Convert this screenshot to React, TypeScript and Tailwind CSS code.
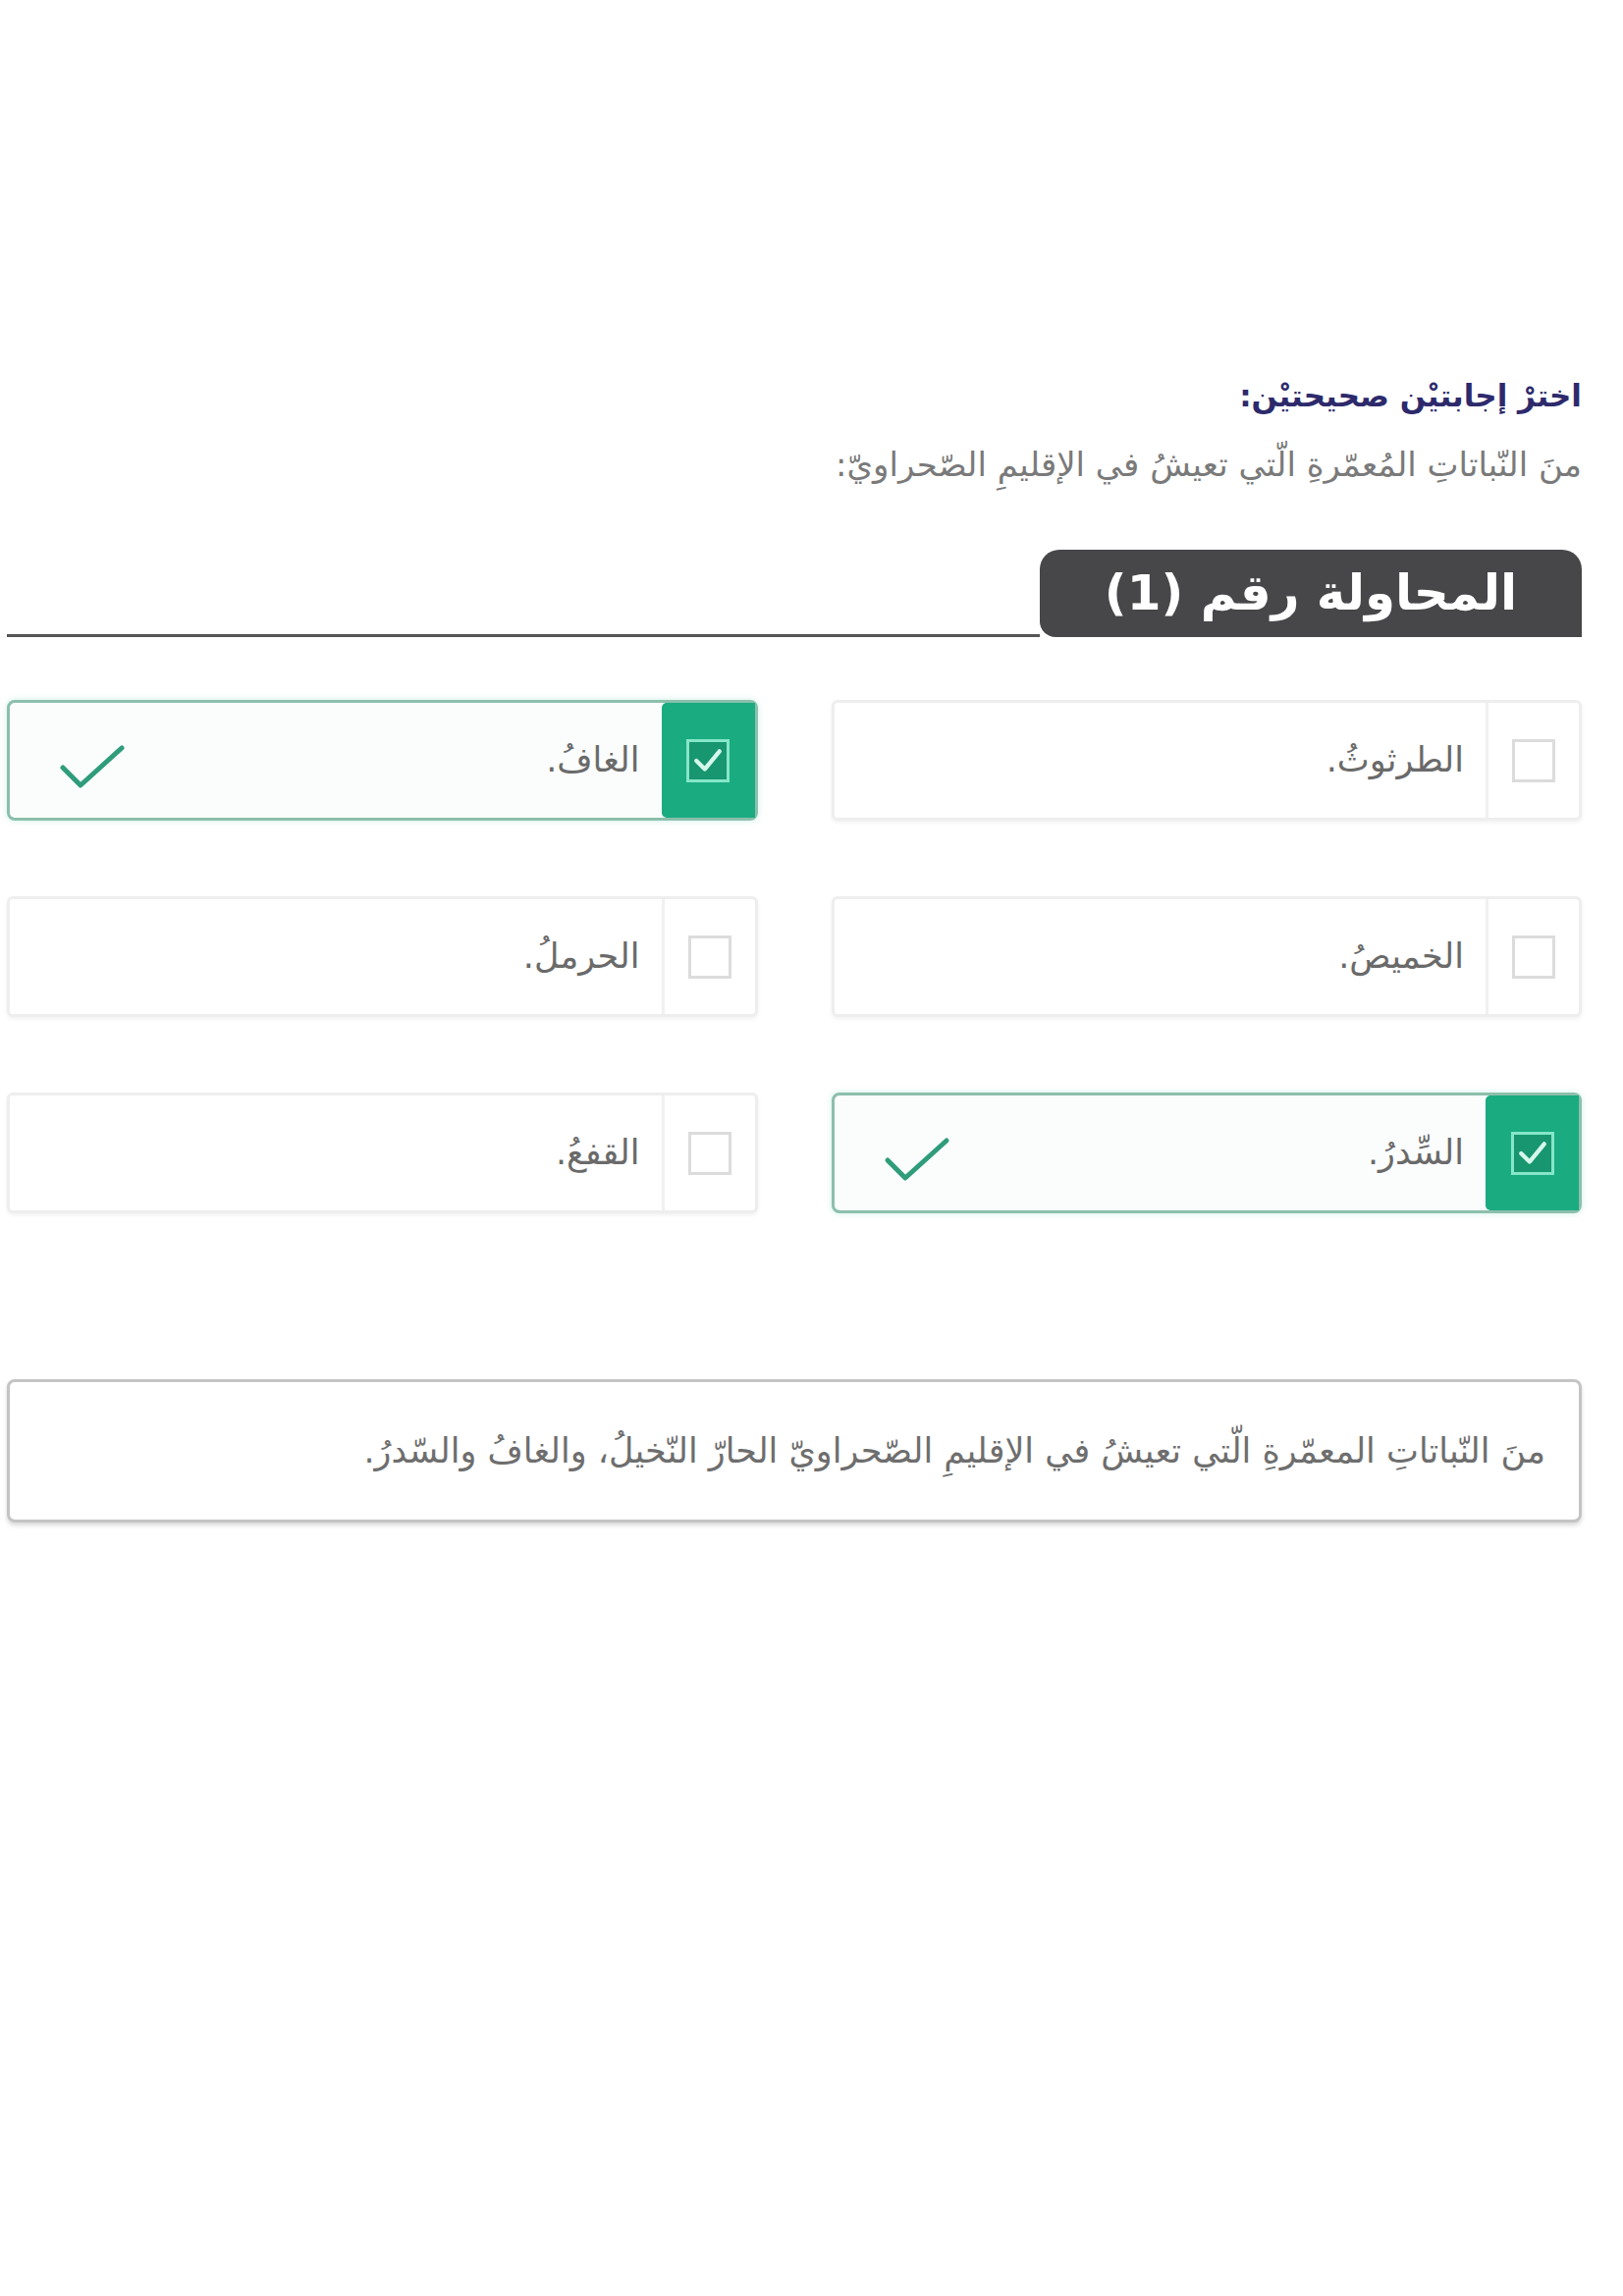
import React from 'react'

interface Option {
  label: string
  checked: boolean
}

// rows go right -> left because the page is rtl
const options: Option[] = [
  { label: 'الطرثوثُ.', checked: false },
  { label: 'الغافُ.', checked: true },
  { label: 'الخميصُ.', checked: false },
  { label: 'الحرملُ.', checked: false },
  { label: 'السِّدرُ.', checked: true },
  { label: 'القفعُ.', checked: false },
]

function BigCheck() {
  return (
    <svg width="68" height="48" viewBox="0 0 68 48" fill="none">
      <path d="M4 24 L22 42 L64 4" stroke="#2f9c7a" strokeWidth="5" strokeLinecap="round" strokeLinejoin="round" />
    </svg>
  )
}

function OptionCard({ option }: { option: Option }) {
  if (option.checked) {
    return (
      <div className="flex h-[123px] items-stretch rounded-[8px] border-[3px] border-[#8cbfac] bg-[#fbfdfd] shadow-[0_0_6px_rgba(60,200,160,0.25)]">
        <div className="flex w-[95px] shrink-0 items-center justify-center rounded-l-[5px] bg-[#1aab81]">
          <div className="flex h-[44px] w-[44px] items-center justify-center border-[3px] border-[#86e6c8] bg-[#17966f]">
            <svg width="30" height="26" viewBox="0 0 28 24" fill="none">
              <path d="M3 12 L11 20 L25 3" stroke="#d6f7ec" strokeWidth="4" strokeLinecap="round" strokeLinejoin="round" />
            </svg>
          </div>
        </div>
        <div className="flex flex-1 items-center pr-[22px] text-[35px] text-[#6a6a6a]">{option.label}</div>
        <div className="flex items-center pl-[50px] pt-[14px]">
          <BigCheck />
        </div>
      </div>
    )
  }
  return (
    <div className="flex h-[123px] items-stretch rounded-[6px] border-[3px] border-[#eeeeee] bg-white shadow-[0_2px_4px_rgba(0,0,0,0.06)]">
      <div className="flex w-[95px] shrink-0 items-center justify-center border-l-[3px] border-[#f0f0f0]">
        <div className="h-[44px] w-[44px] border-[3px] border-[#dcdcdc] bg-white" />
      </div>
      <div className="flex flex-1 items-center pr-[22px] text-[35px] text-[#6a6a6a]">{option.label}</div>
    </div>
  )
}

export default function App() {
  return (
    <div dir="rtl" className="min-h-[2339px] bg-white font-['DejaVu_Sans',sans-serif]">
      <div className="ml-[7px] mr-[42px] pt-[380px]">
        <h1 className="text-[31px] leading-[46px] font-bold text-[#2d2a6c]">اخترْ إجابتيْن صحيحتيْن:</h1>
        <p className="mt-[24px] text-[34px] leading-[46px] text-[#7a7a7a]">
          منَ النّباتاتِ المُعمّرةِ الّتي تعيشُ في الإقليمِ الصّحراويّ:
        </p>

        {/* attempt tab */}
        <div className="mt-[64px] flex items-end">
          <div className="flex h-[89px] w-[552px] shrink-0 items-center justify-center rounded-t-[20px] rounded-bl-[16px] bg-[#47474a] text-[50px] font-bold text-white">
            المحاولة رقم (1)
          </div>
          <div className="flex-1 border-b-[3px] border-[#555555]" />
        </div>

        {/* options */}
        <div className="mt-[64px] grid grid-cols-2 gap-x-[75px] gap-y-[77px]">
          {options.map((o, i) => (
            <OptionCard key={i} option={o} />
          ))}
        </div>

        {/* answer */}
        <div className="mt-[169px] flex h-[146px] items-center rounded-[8px] border-[3px] border-[#c4c4c4] bg-white pr-[34px] text-[35px] text-[#6e6e6e] shadow-[0_3px_4px_rgba(0,0,0,0.15)]">
          منَ النّباتاتِ المعمّرةِ الّتي تعيشُ في الإقليمِ الصّحراويّ الحارّ النّخيلُ، والغافُ والسّدرُ.
        </div>
      </div>
    </div>
  )
}
